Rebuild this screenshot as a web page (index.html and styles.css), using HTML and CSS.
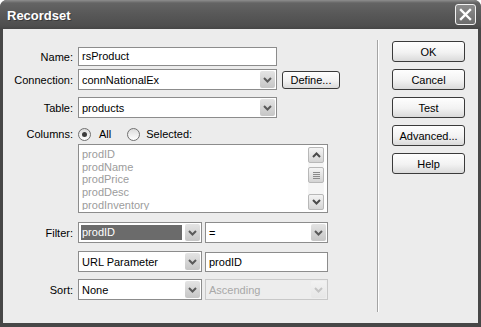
FILE: index.html
```html
<html>
<head>
    <meta charset="utf-8" />
    <title>Recordset</title>
    <link rel="stylesheet" href="styles.css">
</head>

<body>
    <div class="window">
        <div class="titlebar">
            <span class="title">Recordset</span>
            <span class="close">
                <svg width="13" height="13" viewBox="0 0 13 13">
                    <path d="M2 2 L11 11 M11 2 L2 11" stroke="#fff" stroke-width="2.4" stroke-linecap="square" />
                </svg>
            </span>
        </div>
        <div class="client">
            <div class="form">
                <div class="row r-name">
                    <span class="lbl">Name:</span>
                    <div class="input w-wide">rsProduct</div>
                </div>
                <div class="row r-conn">
                    <span class="lbl">Connection:</span>
                    <div class="combo w-wide">
                        <span class="val">connNationalEx</span>
                        <span class="arrow"><svg width="9" height="6" viewBox="0 0 9 6"><path d="M1 1 L4.5 4.5 L8 1" fill="none" stroke="#5a5a5a" stroke-width="2" /></svg></span>
                    </div>
                    <button class="btn btn-define">Define...</button>
                </div>
                <div class="row r-table">
                    <span class="lbl">Table:</span>
                    <div class="combo w-wide">
                        <span class="val">products</span>
                        <span class="arrow"><svg width="9" height="6" viewBox="0 0 9 6"><path d="M1 1 L4.5 4.5 L8 1" fill="none" stroke="#5a5a5a" stroke-width="2" /></svg></span>
                    </div>
                </div>
                <div class="row r-cols">
                    <span class="lbl">Columns:</span>
                    <span class="radio checked"></span>
                    <span class="opt-all">All</span>
                    <span class="radio"></span>
                    <span class="opt-sel">Selected:</span>
                </div>
                <div class="row r-list">
                    <span class="lbl"></span>
                    <div class="list">
                        <div class="items">
                            <div>prodID</div>
                            <div>prodName</div>
                            <div>prodPrice</div>
                            <div>prodDesc</div>
                            <div>prodInventory</div>
                        </div>
                        <div class="scroll">
                            <span class="sbtn"><svg width="9" height="6" viewBox="0 0 9 6"><path d="M1 5 L4.5 1.5 L8 5" fill="none" stroke="#4a4a4a" stroke-width="2" /></svg></span>
                            <span class="thumb"><i></i><i></i><i></i><i></i></span>
                            <span class="track"></span>
                            <span class="sbtn"><svg width="9" height="6" viewBox="0 0 9 6"><path d="M1 1 L4.5 4.5 L8 1" fill="none" stroke="#4a4a4a" stroke-width="2" /></svg></span>
                        </div>
                    </div>
                </div>
                <div class="row r-filter">
                    <span class="lbl">Filter:</span>
                    <div class="combo w-half">
                        <span class="val sel">prodID</span>
                        <span class="arrow"><svg width="9" height="6" viewBox="0 0 9 6"><path d="M1 1 L4.5 4.5 L8 1" fill="none" stroke="#5a5a5a" stroke-width="2" /></svg></span>
                    </div>
                    <div class="combo w-half second">
                        <span class="val">=</span>
                        <span class="arrow"><svg width="9" height="6" viewBox="0 0 9 6"><path d="M1 1 L4.5 4.5 L8 1" fill="none" stroke="#5a5a5a" stroke-width="2" /></svg></span>
                    </div>
                </div>
                <div class="row r-url">
                    <span class="lbl"></span>
                    <div class="combo w-half">
                        <span class="val">URL Parameter</span>
                        <span class="arrow"><svg width="9" height="6" viewBox="0 0 9 6"><path d="M1 1 L4.5 4.5 L8 1" fill="none" stroke="#5a5a5a" stroke-width="2" /></svg></span>
                    </div>
                    <div class="input w-half second tall">prodID</div>
                </div>
                <div class="row r-sort">
                    <span class="lbl">Sort:</span>
                    <div class="combo w-half">
                        <span class="val">None</span>
                        <span class="arrow"><svg width="9" height="6" viewBox="0 0 9 6"><path d="M1 1 L4.5 4.5 L8 1" fill="none" stroke="#5a5a5a" stroke-width="2" /></svg></span>
                    </div>
                    <div class="combo w-half second disabled">
                        <span class="val">Ascending</span>
                        <span class="arrow"><svg width="9" height="6" viewBox="0 0 9 6"><path d="M1 1 L4.5 4.5 L8 1" fill="none" stroke="#c4c4c4" stroke-width="2" /></svg></span>
                    </div>
                </div>
            </div>
            <div class="sep"></div>
            <div class="buttons">
                <button class="btn">OK</button>
                <button class="btn">Cancel</button>
                <button class="btn">Test</button>
                <button class="btn">Advanced...</button>
                <button class="btn">Help</button>
            </div>
        </div>
    </div>
</body>

</html>
```

FILE: styles.css
```css
body{
    padding: 0;
    margin: 0;
    background-color: #fff;
    font-family: "Liberation Sans", Arial, sans-serif;
    font-size: 11px;
    color: #000;
}
.window {
    width: 481px;
    height: 327px;
    display: flex;
    flex-direction: column;
    background-color: #474747;
    border-radius: 7px 7px 0 0;
}
.titlebar {
    height: 29px;
    display: flex;
    align-items: center;
    padding: 0 5px 0 7px;
    border-radius: 7px 7px 0 0;
    background: linear-gradient(#8e8e8e, #646464 3px, #585858 14px, #4e4e4e 26px, #454545);
}
.title {
    flex: 1;
    color: #fff;
    font-weight: bold;
    font-size: 13px;
    text-shadow: 1px 1px 0 #3a3a3a;
    padding-top: 1px;
}
.close {
    width: 21px;
    height: 21px;
    box-sizing: border-box;
    border: 1px solid #f2f2f2;
    border-radius: 3px;
    background: linear-gradient(#8c8c8c, #6c6c6c);
    display: flex;
    align-items: center;
    justify-content: center;
}
.client {
    flex: 1;
    display: flex;
    margin: 0 3px 4px 3px;
    background-color: #ececec;
}
.form {
    width: 374px;
    padding-top: 18px;
    box-sizing: border-box;
}
.row {
    display: flex;
    align-items: center;
}
.lbl {
    width: 75px;
    padding-right: 5px;
    box-sizing: border-box;
    text-align: right;
    flex: none;
}
.r-conn { margin-top: 3px; }
.r-table { margin-top: 7px; }
.r-cols { margin-top: 9px; height: 14px; }
.r-list { margin-top: 3px; }
.r-filter { margin-top: 9px; }
.r-url { margin-top: 8px; }
.r-sort { margin-top: 7px; }

.input {
    box-sizing: border-box;
    height: 19px;
    line-height: 17px;
    border: 1px solid #8c8c8c;
    background-color: #fff;
    padding-left: 3px;
}
.input.tall {
    height: 20px;
    line-height: 18px;
}
.w-wide { width: 199px; }
.w-half { width: 124px; }
.second { margin-left: 3px; width: 123px; }

.combo {
    box-sizing: border-box;
    height: 21px;
    display: flex;
    align-items: center;
    padding: 1px;
    border: 1px solid #8c8c8c;
    background-color: #fff;
}
.combo .val {
    flex: 1;
    padding-left: 2px;
    white-space: nowrap;
    overflow: hidden;
}
.combo .val.sel {
    height: 15px;
    line-height: 15px;
    margin: 0 3px 0 1px;
    padding-left: 1px;
    background-color: #6b6b6b;
    color: #fff;
}
.arrow {
    width: 15px;
    height: 17px;
    flex: none;
    display: flex;
    align-items: center;
    justify-content: center;
    border-radius: 2px;
    background: linear-gradient(#e4e4e4, #c6c6c6);
}
.combo.disabled {
    border-color: #c8c8c8;
    background-color: #ededed;
    color: #a8a8a8;
}
.combo.disabled .arrow {
    background: linear-gradient(#f2f2f2, #e6e6e6);
}

.radio {
    width: 13px;
    height: 13px;
    box-sizing: border-box;
    border: 1px solid #707070;
    border-radius: 50%;
    background: linear-gradient(#dcdcdc, #fff);
    display: flex;
    align-items: center;
    justify-content: center;
    flex: none;
}
.radio.checked::after {
    content: "";
    width: 5px;
    height: 5px;
    border-radius: 50%;
    background-color: #3c3c3c;
}
.opt-all { margin: 0 16px 0 8px; }
.opt-sel { margin-left: 6px; }

.list {
    width: 250px;
    height: 69px;
    box-sizing: border-box;
    display: flex;
    padding: 2px 3px 2px 3px;
    border: 1px solid #8c8c8c;
    background-color: #fff;
}
.items {
    flex: 1;
    padding-top: 1px;
    line-height: 12.7px;
    color: #9c9c9c;
    overflow: hidden;
}
.scroll {
    width: 16px;
    display: flex;
    flex-direction: column;
    background-color: #f5f5f5;
}
.sbtn, .thumb {
    height: 16px;
    box-sizing: border-box;
    display: flex;
    align-items: center;
    justify-content: center;
    border: 1px solid #b8b8b8;
    border-radius: 2px;
    background: linear-gradient(#f4f4f4, #d4d4d4);
}
.thumb {
    margin-top: 4px;
    flex-direction: column;
    gap: 1px;
}
.thumb i {
    width: 7px;
    height: 1px;
    background-color: #8a8a8a;
}
.track { flex: 1; }

.btn {
    box-sizing: border-box;
    width: 73px;
    height: 21px;
    padding: 0;
    border: 1px solid #3a3a3a;
    border-radius: 3px;
    background: linear-gradient(#fefefe, #f2f2f2 55%, #dadada);
    font-family: "Liberation Sans", Arial, sans-serif;
    font-size: 11px;
    color: #000;
}
.btn-define {
    width: 58px;
    height: 18px;
    margin-left: 5px;
}
.sep {
    width: 1px;
    margin: 11px 0;
    background-color: #a4a4a4;
    border-right: 1px solid #fff;
}
.buttons {
    display: flex;
    flex-direction: column;
    gap: 7px;
    padding-top: 12px;
    margin-left: 13px;
}
```
